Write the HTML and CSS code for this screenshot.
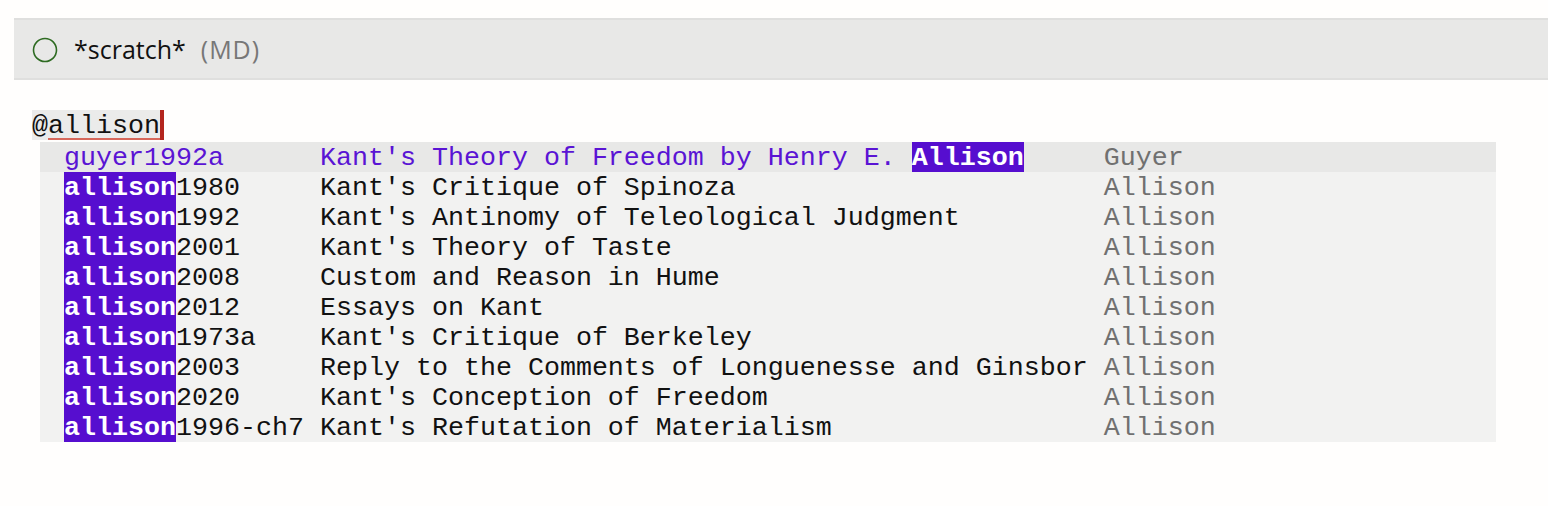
FILE: index.html
```html
<!DOCTYPE html>
<html>
<head>
<meta charset="utf-8">
<link rel="stylesheet" href="styles.css">
</head>
<body>
<div class="modeline">
  <svg class="status-icon" width="26" height="26" viewBox="0 0 26 26"><circle cx="13" cy="13" r="11.5" fill="none" stroke="#2e6b22" stroke-width="1.6"/></svg>
  <span class="buffer-name">*scratch*</span>
  <span class="mode-name">(MD)</span>
</div>
<div class="editor">
  <div class="input-line"><span class="region">@<span class="typed">allison</span></span><span class="cursor"></span></div>
  <div class="popup">
    <div class="row selected"><span class="key">guyer1992a</span><span class="title">Kant's Theory of Freedom by Henry E. <span class="match">Allison</span></span><span class="author">Guyer</span></div>
    <div class="row"><span class="key"><span class="match">allison</span>1980</span><span class="title">Kant's Critique of Spinoza</span><span class="author">Allison</span></div>
    <div class="row"><span class="key"><span class="match">allison</span>1992</span><span class="title">Kant's Antinomy of Teleological Judgment</span><span class="author">Allison</span></div>
    <div class="row"><span class="key"><span class="match">allison</span>2001</span><span class="title">Kant's Theory of Taste</span><span class="author">Allison</span></div>
    <div class="row"><span class="key"><span class="match">allison</span>2008</span><span class="title">Custom and Reason in Hume</span><span class="author">Allison</span></div>
    <div class="row"><span class="key"><span class="match">allison</span>2012</span><span class="title">Essays on Kant</span><span class="author">Allison</span></div>
    <div class="row"><span class="key"><span class="match">allison</span>1973a</span><span class="title">Kant's Critique of Berkeley</span><span class="author">Allison</span></div>
    <div class="row"><span class="key"><span class="match">allison</span>2003</span><span class="title">Reply to the Comments of Longuenesse and Ginsbor</span><span class="author">Allison</span></div>
    <div class="row"><span class="key"><span class="match">allison</span>2020</span><span class="title">Kant's Conception of Freedom</span><span class="author">Allison</span></div>
    <div class="row"><span class="key"><span class="match">allison</span>1996-ch7</span><span class="title">Kant's Refutation of Materialism</span><span class="author">Allison</span></div>
  </div>
</div>
</body>
</html>
```

FILE: styles.css
```css
html, body {
  margin: 0;
  padding: 0;
  background: #fffefd;
}

.modeline {
  margin-top: 18px;
  margin-left: 14px;
  height: 58px;
  border-top: 2px solid #dfdfde;
  border-bottom: 2px solid #dfdfde;
  background: #e8e8e7;
  display: flex;
  align-items: center;
  padding-left: 18px;
  font-family: "Open Sans", "Liberation Sans", sans-serif;
  font-size: 25px;
}

.status-icon {
  display: block;
  margin-right: 16px;
  margin-top: 1px;
}

.buffer-name {
  color: #111;
}

.mode-name {
  color: #777;
  margin-left: 15px;
  letter-spacing: 1px;
}

.editor {
  padding-top: 30px;
  font-family: "Liberation Mono", "DejaVu Sans Mono", monospace;
  font-size: 26.67px;
  line-height: 32px;
  color: #111;
}

.input-line {
  padding-left: 32px;
  height: 30px;
  display: flex;
  white-space: pre;
}

.region {
  background: #ebebea;
  display: block;
  height: 30px;
}

.typed {
  border-bottom: 2px solid #d7685b;
  display: inline-block;
  height: 28px;
}

.cursor {
  display: block;
  width: 4px;
  height: 30px;
  background: #b3251d;
}

.popup {
  margin-top: 2px;
  margin-left: 40px;
  width: 1456px;
  background: #f2f2f1;
}

.row {
  height: 30px;
  padding-left: 24px;
  white-space: pre;
  overflow: hidden;
}

.row.selected {
  background: #e8e8e7;
  color: #5a14d4;
}

.key {
  display: inline-block;
  width: 16ch;
}

.title {
  display: inline-block;
  width: 49ch;
}

.author {
  color: #707070;
}

.match {
  display: inline-block;
  height: 30px;
  background: #560ecf;
  color: #ffffff;
  font-weight: bold;
}
```
